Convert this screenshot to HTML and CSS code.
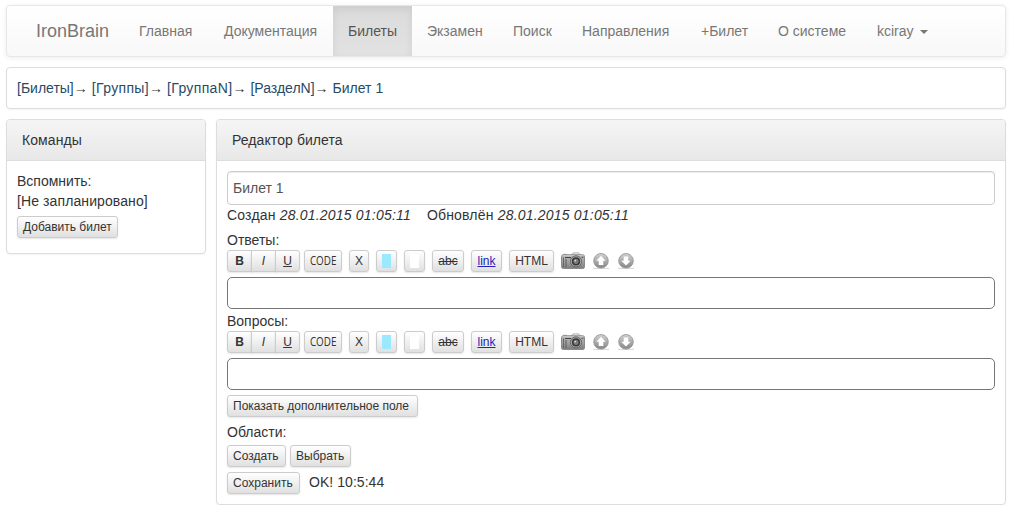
FILE: index.html
```html
<!DOCTYPE html>
<html lang="ru">
<head>
<meta charset="utf-8">
<title>IronBrain</title>
<link rel="stylesheet" href="styles.css">
</head>
<body>
<svg class="defs" width="0" height="0" aria-hidden="true">
  <defs>
    <linearGradient id="metal" x1="0" y1="0" x2="0" y2="1"><stop offset="0" stop-color="#b4b4b4"/><stop offset=".5" stop-color="#a2a2a2"/><stop offset="1" stop-color="#7c7c7c"/></linearGradient>
    <linearGradient id="disc" x1="0" y1="0" x2="0" y2="1"><stop offset="0" stop-color="#d2d2d2"/><stop offset=".55" stop-color="#a8a8a8"/><stop offset="1" stop-color="#858585"/></linearGradient>
    <symbol id="camera" viewBox="0 0 24 18">
      <path d="M10.5 3 12 .9h5.8L19.3 3" fill="#eee" stroke="#b0b0b0"/>
      <path d="M2 1.8h4v1.5H2z" fill="#aaa"/>
      <rect x=".5" y="2.8" width="23" height="13.7" rx="1.8" fill="url(#metal)" stroke="#8a8a8a"/>
      <path d="M1.5 3.8h21" stroke="#d0d0d0"/>
      <path d="M2.5 5.5v9.5" stroke="#666"/>
      <path d="M5 7v8" stroke="#666" stroke-width="1.2"/>
      <path d="M4 5.5h6" stroke="#444"/>
      <circle cx="15" cy="9.4" r="5.6" fill="#a9a9a9" stroke="#666"/>
      <circle cx="15" cy="9.4" r="4.1" fill="#383838"/>
      <circle cx="15" cy="9.4" r="2.2" fill="#777" stroke="#999" stroke-width=".6"/>
      <circle cx="14.3" cy="8.6" r=".9" fill="#ddd"/>
      <path d="M20.5 5.2h2" stroke="#555"/>
    </symbol>
    <symbol id="up" viewBox="0 0 16 16">
      <path d="M0 15.4h16" stroke="#ccc" stroke-width=".8"/>
      <circle cx="8" cy="7.8" r="7.3" fill="url(#disc)" stroke="#929292" stroke-width=".8"/>
      <path d="M8 2.8 12.7 7.7H10.3V12H5.7V7.7H3.3z" fill="#fff"/>
    </symbol>
    <symbol id="down" viewBox="0 0 16 16">
      <path d="M0 15.4h16" stroke="#ccc" stroke-width=".8"/>
      <circle cx="8" cy="7.8" r="7.3" fill="url(#disc)" stroke="#929292" stroke-width=".8"/>
      <path d="M8 12.6 12.7 7.7H10.3V3.4H5.7v4.3H3.3z" fill="#fff"/>
    </symbol>
  </defs>
</svg>

<nav class="navbar">
  <a class="brand">IronBrain</a>
  <a class="w-85">Главная</a>
  <a class="w-124">Документация</a>
  <a class="w-79 active">Билеты</a>
  <a class="w-86">Экзамен</a>
  <a class="w-69">Поиск</a>
  <a class="w-119">Направления</a>
  <a class="w-77">+Билет</a>
  <a class="w-99">О системе</a>
  <a class="w-81">kciray <i class="caret"></i></a>
</nav>

<div class="box crumbs"><a>[Билеты]</a><span class="arrow">→</span><a class="wide">[Группы]</a><span class="arrow">→</span><a class="wide">[ГруппаN]</a><span class="arrow">→</span><a>[РазделN]</a><span class="arrow">→</span><a>Билет 1</a></div>

<div class="columns">
  <section class="box side">
    <h3 class="heading">Команды</h3>
    <div class="content">
      <div>Вспомнить:</div>
      <div class="plan">[Не запланировано]</div>
      <button class="btn add">Добавить билет</button>
    </div>
  </section>
  <section class="box editor">
    <h3 class="heading">Редактор билета</h3>
    <div class="content">
      <input class="title" value="Билет 1">
      <div class="dates"><span>Создан <em>28.01.2015 01:05:11</em></span><span>Обновлён <em>28.01.2015 01:05:11</em></span></div>

      <div class="label">Ответы:</div>
      <div class="toolbar">
        <div class="group"><button class="btn"><b>B</b></button><button class="btn"><i>I</i></button><button class="btn"><u>U</u></button></div>
        <button class="btn code"><span>CODE</span></button>
        <button class="btn x">X</button>
        <button class="btn swatch"><span class="cyan"></span></button>
        <button class="btn swatch"><span class="white"></span></button>
        <button class="btn abc"><s>abc</s></button>
        <button class="btn link"><u>link</u></button>
        <button class="btn html">HTML</button>
        <svg class="camera"><use href="#camera"/></svg>
        <svg class="round"><use href="#up"/></svg>
        <svg class="round"><use href="#down"/></svg>
      </div>
      <div class="area"></div>

      <div class="label">Вопросы:</div>
      <div class="toolbar">
        <div class="group"><button class="btn"><b>B</b></button><button class="btn"><i>I</i></button><button class="btn"><u>U</u></button></div>
        <button class="btn code"><span>CODE</span></button>
        <button class="btn x">X</button>
        <button class="btn swatch"><span class="cyan"></span></button>
        <button class="btn swatch"><span class="white"></span></button>
        <button class="btn abc"><s>abc</s></button>
        <button class="btn link"><u>link</u></button>
        <button class="btn html">HTML</button>
        <svg class="camera"><use href="#camera"/></svg>
        <svg class="round"><use href="#up"/></svg>
        <svg class="round"><use href="#down"/></svg>
      </div>
      <div class="area last"></div>

      <button class="btn extra">Показать дополнительное поле</button>
      <div class="regions">Области:</div>
      <div class="row"><button class="btn create">Создать</button><button class="btn choose">Выбрать</button></div>
      <div class="row save-row"><button class="btn save">Сохранить</button><span class="status">OK! 10:5:44</span></div>
    </div>
  </section>
</div>
</body>
</html>
```
FILE: styles.css
```css
* { box-sizing: border-box; }
body {
  margin: 0;
  padding: 5px 6px 0;
  background: #fff;
  color: #333;
  font: 14px/20px "Liberation Sans", Arial, sans-serif;
}
.defs { display: block; height: 0; }
.navbar {
  display: flex;
  width: 1000px;
  height: 52px;
  padding-left: 14px;
  border: 1px solid #e7e7e7;
  border-radius: 4px;
  background: linear-gradient(#fff, #f8f8f8);
  box-shadow: 0 1px 5px rgba(0,0,0,.075);
}
.navbar a {
  padding: 15px 0 15px 15px;
  color: #777;
  white-space: nowrap;
}
.navbar .brand { width: 103px; font-size: 18px; }
.navbar .active {
  color: #555;
  background: linear-gradient(#dbdbdb, #e2e2e2);
  box-shadow: inset 0 3px 9px rgba(0,0,0,.075);
}
.w-69 { width: 69px; }
.w-77 { width: 77px; }
.w-79 { width: 79px; }
.w-81 { width: 81px; }
.w-85 { width: 85px; }
.w-86 { width: 86px; }
.w-99 { width: 99px; }
.w-119 { width: 119px; }
.w-124 { width: 124px; }
.caret {
  display: inline-block;
  margin-left: 3px;
  vertical-align: middle;
  border: 4px solid transparent;
  border-top-color: #777;
  border-bottom: 0;
}
.box {
  border: 1px solid #ddd;
  border-radius: 4px;
  background: #fff;
  box-shadow: 0 1px 2px rgba(0,0,0,.05);
}
.crumbs {
  width: 1000px;
  height: 42px;
  margin: 10px 0;
  padding: 10px;
}
.crumbs a { color: #264b66; }
.crumbs .wide { letter-spacing: .35px; }
.arrow { display: inline-block; width: 18px; font-family: "Liberation Serif", serif; line-height: 16px; }
.columns { display: flex; align-items: flex-start; gap: 10px; }
.side { width: 200px; height: 135px; }
.editor { width: 790px; height: 386px; }
.heading {
  height: 41px;
  margin: 0;
  padding: 10px 15px;
  border-bottom: 1px solid #ddd;
  border-radius: 3px 3px 0 0;
  background: linear-gradient(#f5f5f5, #e8e8e8);
  font-size: 14px;
  font-weight: normal;
  letter-spacing: .08px;
}
.content { padding: 10px; }
.plan { letter-spacing: .1px; }
.title {
  display: block;
  width: 768px;
  height: 34px;
  padding: 6px 5px;
  border: 1px solid #ccc;
  border-radius: 4px;
  color: #555;
  font: inherit;
  box-shadow: inset 0 1px 1px rgba(0,0,0,.075);
}
.dates { display: flex; gap: 16px; height: 25px; letter-spacing: .18px; }
.dates em { letter-spacing: .2px; }
.label { height: 20px; }
.btn {
  display: block;
  height: 22px;
  padding: 0 5px;
  border: 1px solid #ccc;
  border-radius: 3px;
  background: linear-gradient(#fff, #e0e0e0);
  box-shadow: 0 1px 2px rgba(0,0,0,.1);
  color: #333;
  font: 12px/18px "Liberation Sans", Arial, sans-serif;
  text-align: left;
  white-space: nowrap;
}
.add { width: 101px; margin-top: 5px; }
.toolbar { display: flex; height: 22px; gap: 7px; }
.toolbar .btn { padding: 0; text-align: center; }
.group { display: flex; margin-right: -3px; }
.group .btn { width: 25px; margin-right: -1px; border-radius: 0; }
.group .btn:first-child { border-radius: 3px 0 0 3px; }
.group .btn:last-child { margin-right: 0; border-radius: 0 3px 3px 0; }
.toolbar .code { display: flex; width: 38px; justify-content: center; font: 12px/20px "Open Sans", sans-serif; }
.code span { transform: scaleX(.82); }
.x { width: 20px; }
.swatch { display: flex; width: 21px; justify-content: center; align-items: center; }
.swatch span { width: 9px; height: 14px; }
.cyan { background: #9be9ff; }
.white { background: #fff; }
.abc { width: 32px; }
.toolbar .link { width: 31px; color: #2222b8; }
.html { width: 45px; }
.camera { width: 24px; height: 18px; margin-top: 2px; }
.round { width: 16px; height: 16px; margin: 3px 1px 0; }
.round:last-child { margin-left: 1px; }
.area {
  width: 768px;
  height: 32px;
  margin: 5px 0 2px;
  border: 1px solid #767676;
  border-radius: 5px;
}
.area.last { margin-bottom: 5px; }
.extra { width: 191px; }
.regions { margin: 5px 0 3px; }
.row { display: flex; gap: 4px; }
.create { width: 59px; }
.choose { width: 61px; }
.save { width: 73px; }
.save-row { margin-top: 5px; }
.status { margin-left: 5px; letter-spacing: .05px; }
```
